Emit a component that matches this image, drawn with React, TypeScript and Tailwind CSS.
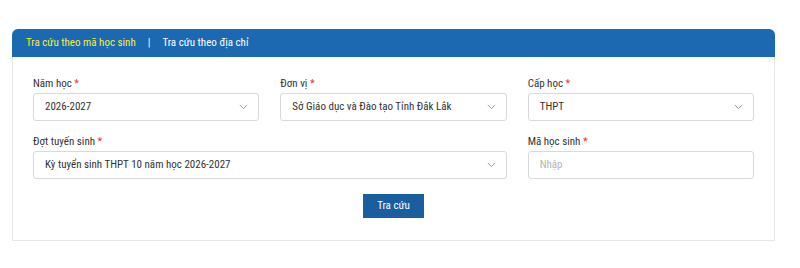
import React from "react";

const Chevron = () => (
  <svg width="9" height="6" viewBox="0 0 9 6" fill="none" className="shrink-0">
    <path d="M0.8 0.9 L4.5 4.6 L8.2 0.9" stroke="#9a9a9a" strokeWidth="1" />
  </svg>
);

const Label = ({ text }: { text: string }) => (
  <div className="text-[11px] leading-[14px] text-[#333] mb-[2px]">
    {text} <span className="text-[#e53935]">*</span>
  </div>
);

const SelectBox = ({ value }: { value: string }) => (
  <div className="h-[28px] border border-[#d9d9d9] rounded-[3px] flex items-center justify-between pl-[11px] pr-[10px] bg-white">
    <span className="text-[11px] text-[#333] whitespace-nowrap">{value}</span>
    <Chevron />
  </div>
);

export default function App() {
  return (
    <div
      className="w-[800px] h-[268px] bg-white pt-[29px] [font-stretch:77%]"
      style={{ fontFamily: "Roboto, sans-serif" }}
    >
      <div className="ml-[12px] w-[763px] border border-[#e6e6e6] rounded-t-[6px]">
        <div className="-mx-px -mt-px h-[28px] bg-[#1c69b1] rounded-t-[6px] flex items-center pl-[14px] text-[11px]">
          <span className="text-[#f5f03a]">Tra cứu theo mã học sinh</span>
          <span className="text-white mx-[12px]">|</span>
          <span className="text-white">Tra cứu theo địa chỉ</span>
        </div>
        <div className="px-[20px] pt-[20px] pb-[22px]">
          <div className="grid grid-cols-3 gap-x-[21px] gap-y-[14px]">
            <div>
              <Label text="Năm học" />
              <SelectBox value="2026-2027" />
            </div>
            <div>
              <Label text="Đơn vị" />
              <SelectBox value="Sở Giáo dục và Đào tạo Tỉnh Đắk Lắk" />
            </div>
            <div>
              <Label text="Cấp học" />
              <SelectBox value="THPT" />
            </div>
            <div className="col-span-2">
              <Label text="Đợt tuyến sinh" />
              <SelectBox value="Kỳ tuyển sinh THPT 10 năm học 2026-2027" />
            </div>
            <div>
              <Label text="Mã học sinh" />
              <div className="h-[28px] border border-[#d9d9d9] rounded-[3px] flex items-center pl-[11px] bg-white">
                <span className="text-[11px] text-[#b3b3b3]">Nhập</span>
              </div>
            </div>
          </div>
          <div className="flex justify-center mt-[15px]">
            <button className="w-[61px] h-[24px] bg-[#1a5e9f] text-white text-[11px]">
              Tra cứu
            </button>
          </div>
        </div>
      </div>
    </div>
  );
}
